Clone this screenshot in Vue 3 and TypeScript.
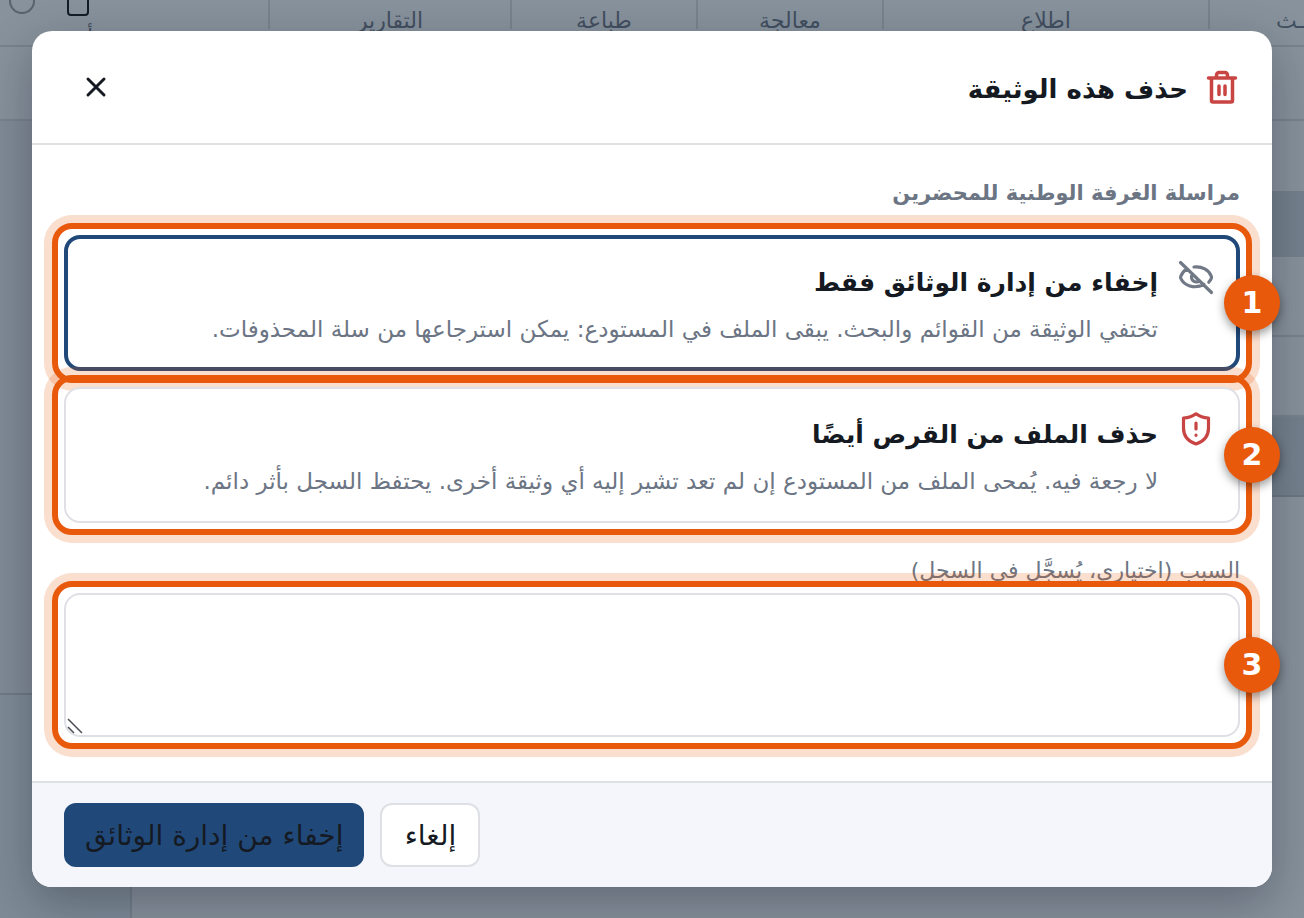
<script setup lang="ts">
import { ref } from 'vue'

type Mode = 'hide' | 'erase'

const mode = ref<Mode>('hide')
const reason = ref('')
const columns = ['ـث', 'اطلاع', 'معالجة', 'طباعة', 'التقارير', 'أ']
</script>

<template>
  <div class="page" dir="rtl" lang="ar">
    <div class="backdrop">
      <div class="columns">
        <span v-for="name in columns" :key="name" class="column"><i v-if="name === 'أ'" class="square"></i><i v-if="name === 'أ'" class="circle"></i>{{ name }}</span>
      </div>
      <div class="rows">
        <div class="row first"></div>
        <div class="row second"></div>
        <div class="row dark"></div>
        <div class="row third"></div>
        <div class="row third"></div>
        <div class="row dark tall"></div>
      </div>
      <div class="rail">
        <div class="rail-head"></div>
        <div class="rail-body"></div>
        <div class="rail-foot"></div>
      </div>
    </div>

    <section class="dialog" role="dialog" aria-modal="true" aria-labelledby="dialog-title">
      <header class="head">
        <svg class="icon-lg danger" viewBox="0 0 40 40" fill="none" stroke="currentColor" stroke-width="3.500" stroke-linecap="round" stroke-linejoin="round" aria-hidden="true">
          <path d="M6.500 11h27M9.500 11V33.500a1.500 1.500 0 0 0 1.500 1.500H29a1.500 1.500 0 0 0 1.500-1.500V11M14.500 11V8a2.500 2.500 0 0 1 2.500-2.500h6a2.500 2.500 0 0 1 2.500 2.500v3M17 19v8.500M23 19v8.500" />
        </svg>
        <h1 id="dialog-title">حذف هذه الوثيقة</h1>
        <button class="close" type="button" aria-label="إغلاق">
          <svg viewBox="0 0 24 24" fill="none" stroke="currentColor" stroke-width="3" stroke-linecap="round" aria-hidden="true"><path d="M4 4l16 16M20 4L4 20" /></svg>
        </button>
      </header>

      <div class="body">
        <p class="document">مراسلة الغرفة الوطنية للمحضرين</p>

        <div class="marked">
          <button class="option" :class="{ selected: mode === 'hide' }" type="button" :aria-pressed="mode === 'hide'" @click="mode = 'hide'">
            <svg class="icon" viewBox="0 0 36 36" fill="none" stroke="currentColor" stroke-width="3.200" stroke-linecap="round" stroke-linejoin="round" aria-hidden="true">
              <path d="M2.500 3.500l31 30M16 8C24 7 31 11 33.300 17.200c.3.900.3 1.400 0 2.200-.6 1.400-1.400 2.700-2.500 3.800M9 9.800C6 11.600 4 14 2.800 17.200c-.3.800-.3 1.400 0 2.200C6 26.500 16 30.500 26 25.500M14.500 15a5 5 0 0 0 7 7" />
            </svg>
            <span class="option-text">
              <strong>إخفاء من إدارة الوثائق فقط</strong>
              <small>تختفي الوثيقة من القوائم والبحث. يبقى الملف في المستودع: يمكن استرجاعها من سلة المحذوفات.</small>
            </span>
          </button>
          <span class="badge">1</span>
        </div>

        <div class="marked">
          <button class="option" :class="{ selected: mode === 'erase' }" type="button" :aria-pressed="mode === 'erase'" @click="mode = 'erase'">
            <svg class="icon danger" viewBox="0 0 36 36" fill="none" stroke="currentColor" stroke-width="3.200" stroke-linecap="round" stroke-linejoin="round" aria-hidden="true">
              <path d="M18 2.800c3.500 2.800 7.500 4 12.500 4.200V17c0 8.500-5 13.500-12.500 16C10.500 30.500 5.500 25.500 5.500 17V7C10.500 6.800 14.500 5.600 18 2.800zM18 12v6M18 24.200v.1" />
            </svg>
            <span class="option-text">
              <strong>حذف الملف من القرص أيضًا</strong>
              <small>لا رجعة فيه. يُمحى الملف من المستودع إن لم تعد تشير إليه أي وثيقة أخرى. يحتفظ السجل بأثر دائم.</small>
            </span>
          </button>
          <span class="badge">2</span>
        </div>

        <label class="reason-label" for="reason">السبب (اختياري، يُسجَّل في السجل)</label>
        <div class="marked">
          <textarea id="reason" v-model="reason"></textarea>
          <svg class="grip" viewBox="0 0 16 16" fill="none" stroke="currentColor" stroke-width="1.500" aria-hidden="true"><path d="M1 1l14 14M1 9l6 6" /></svg>
          <span class="badge">3</span>
        </div>
      </div>

      <footer class="foot">
        <button class="btn" type="button">إلغاء</button>
        <button class="btn primary" type="button">إخفاء من إدارة الوثائق</button>
      </footer>
    </section>
  </div>
</template>

<style>
body {
  margin: 0;
}
</style>

<style scoped>
.page {
  position: relative;
  min-height: 100vh;
  box-sizing: border-box;
  padding: 31px 32px;
  overflow: hidden;
  background: #87929c;
  color: #151a22;
  font-family: 'DejaVu Sans', sans-serif;
}

.page *,
.page *::before {
  box-sizing: border-box;
}

.backdrop {
  position: absolute;
  inset: 0;
  display: grid;
  grid-template-columns: 1fr 132px;
  grid-template-rows: 47px 1fr;
}

.columns {
  grid-column: 1 / -1;
  display: grid;
  grid-template-columns: 94px 326px 186px 186px 242px 1fr;
  border-bottom: 2px solid #78838d;
  color: #424f60;
  font-size: 22px;
  line-height: 24px;
}

.column {
  position: relative;
  height: 29px;
  padding-top: 9px;
  text-align: center;
  white-space: nowrap;
}

.column:first-child {
  text-align: right;
}

.column:last-child {
  padding-top: 26px;
  padding-right: 88px;
}

.column + .column {
  border-right: 2px solid #78838d;
}

.square,
.circle {
  position: absolute;
  top: -12px;
  left: 67px;
  width: 22px;
  height: 28px;
  border: 2px solid #141c27;
  border-radius: 4px;
}

.circle {
  left: 9px;
  width: 26px;
  height: 26px;
  border-color: #58636e;
  border-radius: 50%;
}

.rows .row {
  height: 80px;
  border-bottom: 2px solid #78838d;
}

.rows .first {
  height: 74px;
}

.rows .second {
  height: 70px;
  border-bottom: 0;
}

.rows .dark {
  height: 66px;
  border-bottom: 0;
  background: #74818d;
}

.rows .tall {
  height: 80px;
  border-bottom: 2px solid #6c7781;
}

.rail {
  display: flex;
  flex-direction: column;
  border-right: 2px solid #74808a;
}

.rail-head {
  height: 74px;
  border-bottom: 2px solid #78838d;
}

.rail-body {
  height: 574px;
  border-bottom: 2px solid #6f7a85;
  background: #808b96;
}

.rail-foot {
  flex: 1;
  background: #7e8b97;
}

.dialog {
  position: relative;
  border-radius: 20px;
  background: #fff;
  box-shadow: 0 16px 48px rgba(20, 20, 35, 0.32);
}

.head {
  display: flex;
  align-items: center;
  gap: 14px;
  height: 114px;
  padding: 0 30px 0 44px;
  border-bottom: 2px solid #dfe0e3;
}

h1 {
  flex: 1;
  margin: 0;
  padding-top: 4px;
  font-size: 26px;
  line-height: 40px;
}

.icon-lg {
  flex: none;
  width: 40px;
  height: 40px;
}

.danger {
  color: #c94543;
}

button {
  font: inherit;
  color: inherit;
  cursor: pointer;
}

.close {
  display: grid;
  place-items: center;
  width: 40px;
  height: 40px;
  padding: 0;
  border: 0;
  background: none;
}

.close svg {
  width: 24px;
  height: 24px;
}

.body {
  display: flex;
  flex-direction: column;
  padding: 32px 32px 44px;
}

.document {
  margin: 0 0 26px;
  color: #6c7584;
  font-size: 21px;
  font-weight: 700;
  line-height: 32px;
}

.marked {
  position: relative;
  display: flex;
}

.marked + .marked {
  margin-top: 16px;
}

.marked::before {
  content: '';
  position: absolute;
  inset: -12px;
  border: 6px solid #e8590c;
  border-radius: 20px;
  box-shadow: 0 0 0 8px rgba(232, 89, 12, 0.2);
  pointer-events: none;
}

.badge {
  position: absolute;
  z-index: 1;
  top: 50%;
  left: 100%;
  display: grid;
  place-items: center;
  width: 56px;
  height: 56px;
  margin: -28px 0 0 -16px;
  border-radius: 50%;
  background: #e8590c;
  box-shadow: 0 4px 10px rgba(0, 0, 0, 0.4);
  color: #fff;
  font-size: 30px;
  font-weight: 700;
  line-height: 56px;
}

.option {
  display: flex;
  gap: 20px;
  flex: 1;
  min-height: 136px;
  padding: 22px 24px 18px;
  border: 2px solid #dfe0e6;
  border-radius: 16px;
  background: #fff;
  text-align: right;
}

.option.selected {
  border: 4px solid #20497a;
  padding: 20px 22px 16px;
}

.icon {
  flex: none;
  width: 36px;
  height: 36px;
  color: #717986;
}

.icon.danger {
  color: #c94543;
}

.option-text {
  display: flex;
  flex-direction: column;
  white-space: nowrap;
}

strong {
  font-size: 25px;
  line-height: 48px;
}

small {
  color: #6c7584;
  font-size: 23px;
  line-height: 44px;
}

.reason-label {
  margin: 32px 0 6px;
  color: #6c7584;
  font-size: 22px;
  line-height: 32px;
}

textarea {
  display: block;
  flex: 1;
  height: 144px;
  padding: 16px;
  border: 2px solid #dfe0e6;
  border-radius: 16px;
  outline: 0;
  background: #fff;
  font: inherit;
  font-size: 24px;
  resize: vertical;
}

textarea::-webkit-resizer {
  background: transparent;
}

.grip {
  position: absolute;
  bottom: 3px;
  left: 3px;
  width: 16px;
  height: 16px;
  color: #4b4f55;
  pointer-events: none;
}

.foot {
  display: flex;
  justify-content: flex-end;
  gap: 16px;
  padding: 20px 32px;
  border-top: 2px solid #dfe0e3;
  border-radius: 0 0 20px 20px;
  background: #f4f6fb;
}

.btn {
  min-width: 100px;
  height: 64px;
  padding: 0 19px;
  border: 2px solid #dfe0e6;
  border-radius: 12px;
  background: #fff;
  font-size: 28px;
}

.btn.primary {
  border-color: #20497a;
  background: #20497a;
}
</style>
